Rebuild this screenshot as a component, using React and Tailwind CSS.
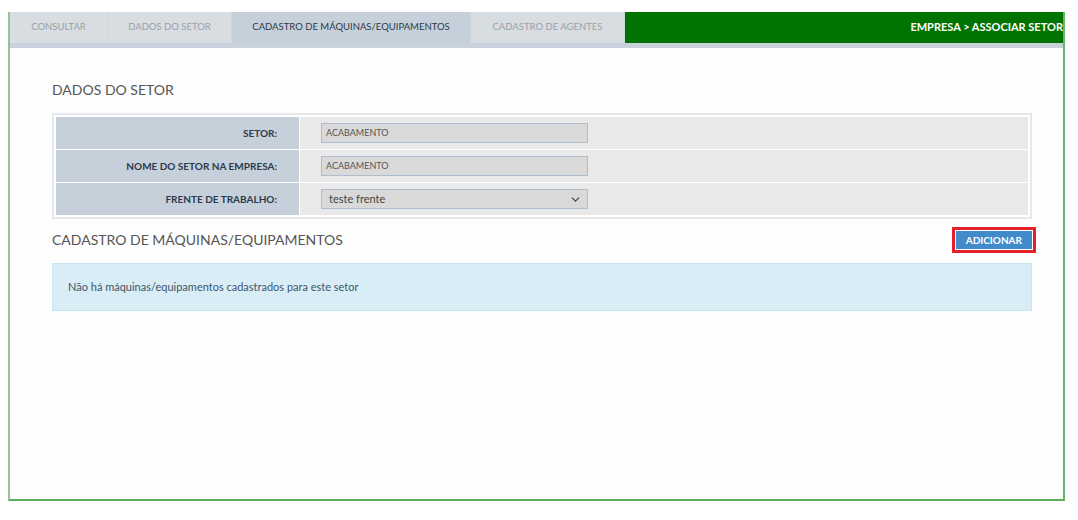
import { ChevronDown } from 'lucide-react'

const tabs = [
  { label: 'CONSULTAR', w: 'w-[98px]' },
  { label: 'DADOS DO SETOR', w: 'w-[124px]' },
  { label: 'CADASTRO DE MÁQUINAS/EQUIPAMENTOS', w: 'w-[239px]', active: true },
  { label: 'CADASTRO DE AGENTES', w: 'w-[154px]' },
]

const rows = [
  { label: 'SETOR:', value: 'ACABAMENTO' },
  { label: 'NOME DO SETOR NA EMPRESA:', value: 'ACABAMENTO' },
  { label: 'FRENTE DE TRABALHO:', value: 'teste frente', select: true },
]

export default function App() {
  return (
    <div className="w-[1078px] h-[520px] bg-white pt-3 pl-2 font-['Lato',sans-serif]">
      <div className="w-[1057px] h-[489px] border-2 border-t-0 border-l-[#92c592] border-r-[#6ab46a] border-b-[#5cad5c] bg-[#fdfdfd]">
        {/* Tabs */}
        <div className="flex h-[36px] border-b-[5px] border-[#c9d2dc]">
          {tabs.map((t) => (
            <div
              key={t.label}
              className={`${t.w} flex items-center justify-center text-[9.5px] border-r border-[#cfd5da] ${
                t.active ? 'bg-[#c6d0da] text-[#2b3a4a]' : 'bg-[#d8dde1] text-[#9aa1a8]'
              }`}
            >
              {t.label}
            </div>
          ))}
          <div className="flex-1 bg-[#007300] flex items-center justify-end text-white font-bold text-[11px]">
            EMPRESA &gt; ASSOCIAR SETOR
          </div>
        </div>

        <div className="pl-[42px] pr-[31px]">
          <h2 className="mt-[35px] text-[14px] text-[#555] leading-none">DADOS DO SETOR</h2>

          {/* Dados do setor */}
          <div className="mt-[16px] border-2 border-[#e3e8ee] p-[2px] flex flex-col gap-[1px] bg-white">
            {rows.map((r) => (
              <div key={r.label} className="flex h-[32px] gap-[1px]">
                <div className="w-[243px] bg-[#c6d0da] flex items-center justify-end pr-[22px] text-[10px] font-bold text-[#2b3a4a]">
                  {r.label}
                </div>
                <div className="flex-1 bg-[#e9e9e9] flex items-center pl-[21px]">
                  <div className="w-[267px] h-[20px] bg-[#d9d9d9] border border-[#aebdcc] flex items-center justify-between px-[4px]">
                    <span className={r.select ? 'text-[11px] text-[#444] pl-[3px]' : 'text-[9px] text-[#555]'}>{r.value}</span>
                    {r.select && <ChevronDown size={13} strokeWidth={2.2} className="text-[#444] mr-[1px]" />}
                  </div>
                </div>
              </div>
            ))}
          </div>

          {/* Cadastro */}
          <div className="mt-[8px] flex items-center justify-between">
            <h2 className="text-[14px] text-[#555] leading-none">CADASTRO DE MÁQUINAS/EQUIPAMENTOS</h2>
            <div className="border-[3px] border-[#e3202e] p-[1px] mr-[-4px]">
              <button className="bg-[#428bca] text-white font-bold text-[10px] px-[10px] h-[18px] flex items-center">
                ADICIONAR
              </button>
            </div>
          </div>

          <div className="mt-[10px] h-[48px] bg-[#d9edf7] border border-[#c6e6f2] flex items-center pl-[15px] text-[11px] text-[#3d5566]">
            Não há máquinas/equipamentos cadastrados para este setor
          </div>
        </div>
      </div>
    </div>
  )
}
